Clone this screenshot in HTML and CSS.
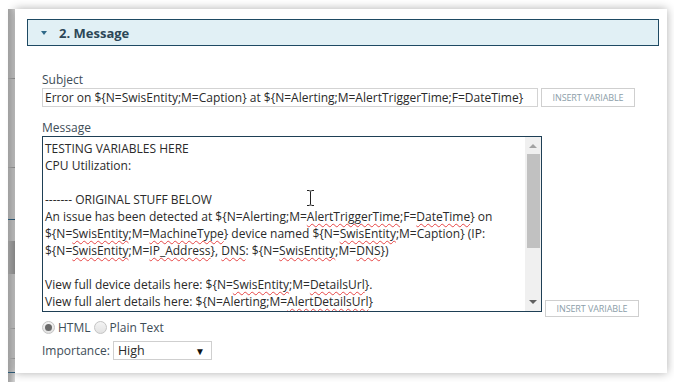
FILE: index.html
```html
<!DOCTYPE html>
<html>
<head>
<meta charset="utf-8">
<link rel="stylesheet" href="styles.css">
</head>
<body>
<div class="stage">
  <div class="bgpage">
    <div class="bg-line l1"></div>
    <div class="bg-line l2"></div>
    <div class="bg-blue b1"></div>
    <div class="bg-block"></div>
    <div class="bg-line l3"></div>
    <div class="bg-line l4"></div>
    <div class="bg-blue b2"></div>
  </div>
  <div class="panel">
    <div class="section-head">
      <span class="caret"></span>
      <span class="section-title">2. Message</span>
    </div>
    <div class="form">
      <label class="field-label lbl-subject">Subject</label>
      <div class="row">
        <div class="input subject">Error on ${N=SwisEntity;M=Caption} at ${N=Alerting;M=AlertTriggerTime;F=DateTime}</div>
        <button class="btn">INSERT VARIABLE</button>
      </div>
      <label class="field-label lbl-message">Message</label>
      <div class="row row-msg">
        <div class="textarea">
          <div class="ta-text">
            <div>TESTING VARIABLES HERE</div>
            <div>CPU Utilization:</div>
            <div>&nbsp;</div>
            <div>------- ORIGINAL STUFF BELOW</div>
            <div>An issue has been detected at ${N=Alerting;M=<span class="sp">AlertTriggerTime</span>;F=<span class="sp">DateTime</span>} on</div>
            <div>${N=<span class="sp">SwisEntity</span>;M=<span class="sp">MachineType</span>} device named ${N=<span class="sp">SwisEntity</span>;M=Caption} (IP:</div>
            <div>${N=<span class="sp">SwisEntity</span>;M=<span class="sp">IP_Address</span>}, <span class="sp">DNS</span>: ${N=<span class="sp">SwisEntity</span>;M=<span class="sp">DNS</span>})</div>
            <div>&nbsp;</div>
            <div>View full device details here: ${N=<span class="sp">SwisEntity</span>;M=<span class="sp">DetailsUrl</span>}.</div>
            <div>View full alert details here: ${N=Alerting;M=<span class="sp">AlertDetailsUrl</span>}</div>
          </div>
          <div class="scrollbar">
            <div class="sb-arrow up"></div>
            <div class="sb-thumb"></div>
            <div class="sb-track"></div>
            <div class="sb-arrow down"></div>
          </div>
          <svg class="ibeam" width="9" height="16" viewBox="0 0 9 16">
            <path d="M1 0.5h2.5M5.5 0.5H8M4.5 1.5v13M1 15.5h2.5M5.5 15.5H8M3.5 1h2M3.5 15h2" stroke="#222" stroke-width="1" fill="none"/>
          </svg>
        </div>
        <button class="btn btn-msg">INSERT VARIABLE</button>
      </div>
      <div class="radios">
        <span class="radio checked"></span><span class="radio-label">HTML</span>
        <span class="radio"></span><span class="radio-label">Plain Text</span>
      </div>
      <div class="importance">
        <span class="imp-label">Importance:</span>
        <div class="select"><span>High</span><span class="sel-arrow">▼</span></div>
      </div>
    </div>
  </div>
</div>
</body>
</html>
```

FILE: styles.css
```css
* { box-sizing: border-box; }
html, body { margin: 0; padding: 0; background: #fff; }
body { font-family: "Open Sans", "Noto Sans", sans-serif; color: #2b2b2b; }

.stage {
  width: 674px;
  height: 382px;
  display: flex;
  padding: 9px 0 0 8px;
  overflow: hidden;
}

.bgpage {
  width: 7px;
  height: 373px;
  background: linear-gradient(to right, #a2a2a2 0, #acacac 2px, #c4c4c4 5px, #d6d6d6 7px);
  display: flex;
  flex-direction: column;
  flex-shrink: 0;
}
.bg-line { height: 1px; background: #9a9a9a; }
.bg-blue { height: 1px; background: #2d5b78; }
.l1 { margin-top: 69px; }
.l2 { margin-top: 88px; }
.b1 { margin-top: 51px; }
.bg-block { margin-top: 21px; height: 33px; background: #9c9c9c; }
.l3 { margin-top: 54px; background: #a8a8a8; }
.l4 { margin-top: 29px; background: #a8a8a8; }
.b2 { margin-top: 13px; }

.panel {
  width: 652px;
  height: 364px;
  background: #fff;
  box-shadow: 0 0 9px rgba(0,0,0,0.32);
  padding: 10px 8px 0 12px;
  position: relative;
  flex-shrink: 0;
}

.section-head {
  height: 27px;
  background: #e1f0f5;
  border: 1px solid #1e4a63;
  display: flex;
  align-items: center;
  padding-left: 13px;
}
.caret {
  width: 0; height: 0;
  border-left: 3px solid transparent;
  border-right: 3px solid transparent;
  border-top: 4px solid #2f6988;
  margin-right: 12px;
}
.section-title {
  font-weight: 700;
  font-size: 13px;
  color: #2c4657;
  letter-spacing: 0;
}

.form { padding-left: 15px; }

.field-label {
  display: block;
  font-size: 12px;
  line-height: 16px;
  color: #3e4d57;
}
.lbl-subject { margin-top: 26px; }
.lbl-message { margin-top: 13px; }

.row { display: flex; align-items: flex-start; gap: 3px; }
.row-msg { align-items: flex-end; }

.input {
  width: 496px;
  height: 19px;
  border: 1px solid #d3d3d3;
  font-size: 12px;
  line-height: 17px;
  padding-left: 2px;
  white-space: nowrap;
  overflow: hidden;
  color: #2a2a2a;
}

.btn {
  width: 94px;
  height: 19px;
  border: 1px solid #cfcfcf;
  background: #fff;
  color: #8c9ea9;
  font-family: "Open Sans", sans-serif;
  font-size: 9px;
  padding: 0;
  letter-spacing: -0.1px;
}
.btn-msg { height: 17px; margin-bottom: -5px; }

.textarea {
  width: 500px;
  height: 176px;
  border: 1px solid #1e3f55;
  display: flex;
  position: relative;
  overflow: hidden;
}
.ta-text {
  flex: 1;
  font-size: 12px;
  line-height: 17px;
  padding: 3px 0 0 2px;
  white-space: nowrap;
  overflow: hidden;
  color: #2a2a2a;
}
.sp {
  text-decoration: underline wavy rgba(225,30,30,0.8);
  text-decoration-thickness: 1px;
  text-underline-offset: 2px;
  text-decoration-skip-ink: none;
}

.scrollbar {
  width: 16px;
  background: #f0f0f0;
  display: flex;
  flex-direction: column;
  align-items: center;
}
.sb-arrow { width: 0; height: 0; border-left: 4px solid transparent; border-right: 4px solid transparent; }
.sb-arrow.up { border-bottom: 4px solid #a3a3a3; margin-top: 7px; margin-bottom: 6px; }
.sb-arrow.down { border-top: 4px solid #606060; margin-bottom: 7px; margin-top: 6px; }
.sb-thumb { width: 13px; height: 94px; background: #c1c1c1; }
.sb-track { flex: 1; }

.ibeam { position: absolute; left: 263px; top: 53px; }

.radios {
  display: flex;
  align-items: center;
  margin-top: 7px;
  height: 16px;
  font-size: 12px;
  color: #3e4d57;
}
.radio {
  width: 13px; height: 13px;
  border-radius: 50%;
  border: 1px solid #c4c4c4;
  background: linear-gradient(#f4f4f4, #e2e2e2);
  position: relative;
  margin-right: 3px;
}
.radio.checked::after {
  content: "";
  position: absolute;
  left: 2px; top: 2px;
  width: 7px; height: 7px;
  border-radius: 50%;
  background: #6a6a6a;
}
.radio-label { margin-right: 3px; }

.importance {
  display: flex;
  align-items: center;
  margin-top: 6px;
  font-size: 12px;
  color: #3e4d57;
}
.imp-label { margin-right: 3px; }
.select {
  width: 99px;
  height: 19px;
  border: 1px solid #cfcfcf;
  display: flex;
  align-items: center;
  justify-content: space-between;
  padding: 0 6px 0 4px;
  color: #2a2a2a;
  font-size: 12.5px;
}
.sel-arrow { font-size: 10px; color: #111; }
```
